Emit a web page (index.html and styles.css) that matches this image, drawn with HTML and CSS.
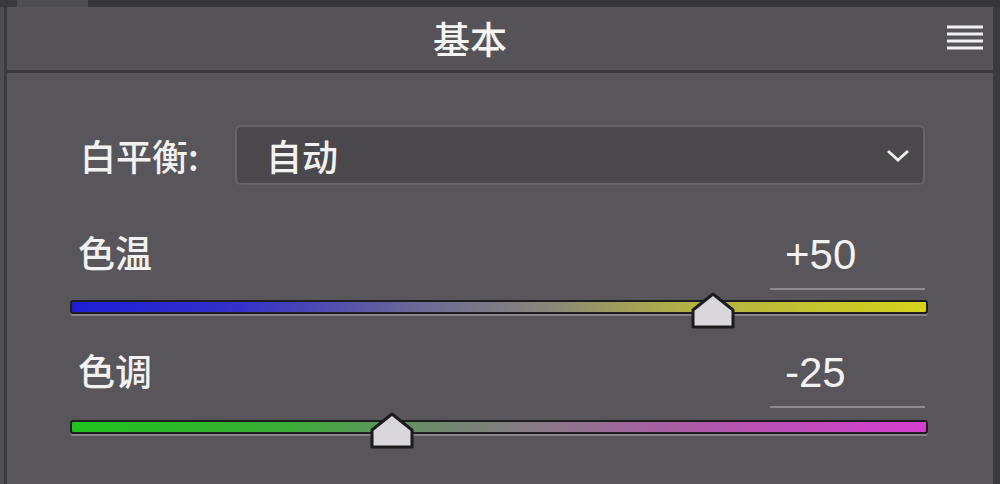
FILE: index.html
```html
<!DOCTYPE HTML>
<html>
	<head>
		<meta charset="utf-8">
		<title>基本</title>
		<link rel="stylesheet" href="styles.css">
	</head>
	<body>
		<!-- tab strip above the panel -->
		<div class="tabs">
			<span class="tabDark"></span>
			<span class="tabLight"></span>
			<span class="tabRest"></span>
		</div>

		<div class="panel">
			<div class="header">
				<div class="title">基本</div>
				<svg class="menuIcon" width="36" height="28" viewBox="0 0 36 28">
					<g stroke="#f2f2f2" stroke-width="3">
						<line x1="0" y1="3" x2="36" y2="3"/>
						<line x1="0" y1="10" x2="36" y2="10"/>
						<line x1="0" y1="17" x2="36" y2="17"/>
						<line x1="0" y1="24" x2="36" y2="24"/>
					</g>
				</svg>
			</div>

			<div class="content">
				<div class="wbRow">
					<label class="wbLabel">白平衡:</label>
					<div class="dropdown">
						<span class="dropText">自动</span>
						<svg class="chevron" width="24" height="14" viewBox="0 0 24 14">
							<polyline points="2,2 12,11 22,2" fill="none" stroke="#eeeeee" stroke-width="3"/>
						</svg>
					</div>
				</div>

				<div class="sliderHead">
					<span class="sliderLabel">色温</span>
					<span class="sliderValue">+50</span>
				</div>
				<div class="track temp">
					<!-- +50 on a -100..100 scale -->
					<div class="thumb" style="left:75%">
						<svg width="44" height="37" viewBox="0 0 44 37">
							<polygon points="2,18 22,2 42,18 42,35 2,35" fill="#d9d7db" stroke="#1b1b1c" stroke-width="3" stroke-linejoin="round"/>
						</svg>
					</div>
				</div>

				<div class="sliderHead">
					<span class="sliderLabel">色调</span>
					<span class="sliderValue">-25</span>
				</div>
				<div class="track tint">
					<!-- -25 on a -100..100 scale -->
					<div class="thumb" style="left:37.5%">
						<svg width="44" height="37" viewBox="0 0 44 37">
							<polygon points="2,18 22,2 42,18 42,35 2,35" fill="#d9d7db" stroke="#1b1b1c" stroke-width="3" stroke-linejoin="round"/>
						</svg>
					</div>
				</div>
			</div>
		</div>
	</body>
</html>
```

FILE: styles.css
```css
body {
	margin:0;
	background-color:#4e4d50;
	color:#f2f2f2;
	font-family:"Noto Sans CJK SC", "Liberation Sans", sans-serif;
	height:484px;
	overflow:hidden;
}

.tabs {
	display:flex;
	height:7px;
}
.tabDark {
	width:17px;
	background-color:#3a393b;
}
.tabLight {
	width:71px;
	background-color:#4f4e51;
}
.tabRest {
	flex:1;
	background-color:#363538;
}

.panel {
	margin-left:4px;
	border-left:3px solid #3c3b3e;
	border-right:7px solid #3a393c;
	background-color:#58565a;
	height:477px;
}

.header {
	display:flex;
	align-items:center;
	height:63px;
	background-color:#555357;
	border-bottom:3px solid #3b3a3d;
}
.title {
	flex:1;
	text-align:center;
	font-size:37px;
	font-weight:500;
	line-height:1;
	color:#f5f5f5;
}
.menuIcon {
	margin-left:14px;
	margin-right:10px;
	margin-top:-2px;
}

.content {
	padding:52px 68px 0 63px;
}

.wbRow {
	display:flex;
	align-items:center;
}
.wbLabel {
	width:165px;
	padding-left:10px;
	box-sizing:border-box;
	font-size:36px;
	font-weight:500;
	line-height:1;
}
.dropdown {
	flex:1;
	display:flex;
	align-items:center;
	height:56px;
	background-color:#4a484c;
	border:2px solid #67656a;
	border-radius:6px;
	padding:0 13px 0 29px;
}
.dropText {
	flex:1;
	font-size:36px;
	font-weight:500;
	line-height:1;
}
.chevron {
	margin-top:2px;
}

.sliderHead {
	display:flex;
	align-items:flex-end;
	justify-content:space-between;
	margin-top:49px;
	padding-left:8px;
}
.sliderHead + .track {
	margin-top:10px;
}
.track + .sliderHead {
	margin-top:38px;
}
.track + .sliderHead + .track {
	margin-top:12px;
}
.sliderLabel {
	font-size:37px;
	font-weight:500;
	line-height:1;
	padding-bottom:19px;
}
.sliderValue {
	width:155px;
	box-sizing:border-box;
	padding-left:15px;
	padding-bottom:12px;
	font-family:"Liberation Sans", sans-serif;
	font-size:42px;
	line-height:1;
	border-bottom:2px solid #8d8b90;
}

.track {
	position:relative;
	height:10px;
	margin-right:-3px;
	border:2px solid #1d1c1e;
	border-radius:3px;
	box-shadow:0 2px 0 #858388;
}
.temp {
	background:linear-gradient(90deg, #1e1ed8 0%, #3632c8 20%, #6c6898 40%, #86857c 55%, #aeae48 70%, #d4d41c 100%);
}
.tint {
	background:linear-gradient(90deg, #20c41e 0%, #3aae36 25%, #6e8a6c 42%, #8a7a88 55%, #b256ac 75%, #d63ed0 100%);
}
.thumb {
	position:absolute;
	top:-10px;
	width:44px;
	height:37px;
	margin-left:-22px;
}
.thumb svg {
	display:block;
}
```
